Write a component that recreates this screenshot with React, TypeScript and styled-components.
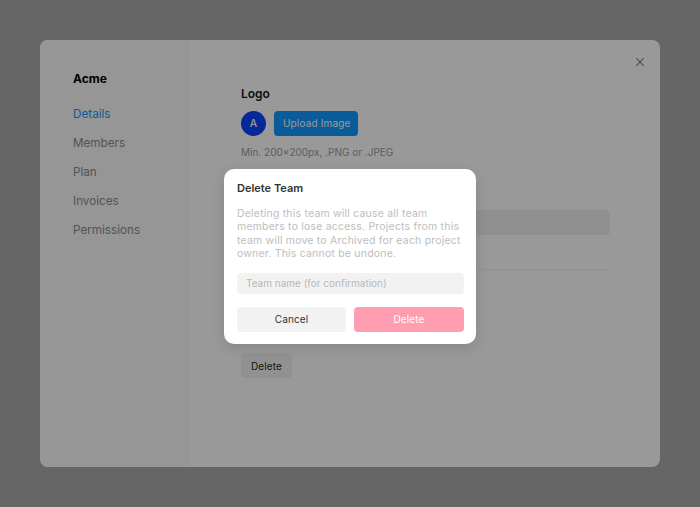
import React from 'react'
import styled, { createGlobalStyle } from 'styled-components'
import { X } from 'lucide-react'

const GlobalStyle = createGlobalStyle`
  html, body {
    margin: 0;
    padding: 0;
    background: #aaaaaa;
    font-family: 'Inter', 'Liberation Sans', sans-serif;
    -webkit-font-smoothing: antialiased;
  }
  * {
    box-sizing: border-box;
  }
`

const Page = styled.div`
  position: relative;
  width: 700px;
  height: 507px;
  padding: 40px;
  overflow: hidden;
`

const Panel = styled.div`
  position: relative;
  display: flex;
  width: 620px;
  height: 427px;
  background: #ffffff;
  border-radius: 8px;
  overflow: hidden;
`

const Sidebar = styled.nav`
  display: flex;
  flex-direction: column;
  width: 150px;
  padding: 32px 0 0 33px;
  background: #fafafa;
`

const TeamName = styled.div`
  font-size: 12px;
  line-height: 14px;
  font-weight: 700;
  color: #000000;
  margin-bottom: 14px;
`

const NavItem = styled.a<{ $active?: boolean }>`
  font-size: 11.7px;
  line-height: 29.1px;
  color: ${(props) => (props.$active ? '#1298ff' : '#8c8c8c')};
`

const Main = styled.main`
  flex: 1;
  padding: 46px 50px 0 51px;
`

const SectionTitle = styled.h3`
  margin: 0;
  font-size: 12px;
  line-height: 16px;
  font-weight: 600;
  color: #171717;
`

const LogoRow = styled.div`
  display: flex;
  align-items: center;
  gap: 8px;
  margin-top: 9px;
`

const Avatar = styled.div`
  display: flex;
  align-items: center;
  justify-content: center;
  width: 25px;
  height: 25px;
  border-radius: 50%;
  background: #0a45ff;
  color: #ffffff;
  font-size: 10.5px;
  font-weight: 500;
`

const UploadButton = styled.button`
  height: 25px;
  padding: 0 8px 1px 9px;
  border: none;
  border-radius: 4px;
  background: #1298ff;
  color: #ffffff;
  font-family: inherit;
  font-size: 10px;
  letter-spacing: 0.15px;
`

const Hint = styled.p`
  margin: 9px 0 0;
  font-size: 10px;
  line-height: 14px;
  color: #9c9c9c;
`

const FakeInput = styled.div`
  height: 25px;
  margin-top: 51px;
  border-radius: 4px;
  background: #f0f0f0;
`

const Divider = styled.hr`
  height: 1px;
  margin: 34px 0 0;
  border: none;
  background: #f2f2f2;
`

const DangerSection = styled.section`
  margin-top: 83px;
`

const GreyButton = styled.button`
  height: 25px;
  padding: 0 10px;
  border: none;
  border-radius: 4px;
  background: #f2f2f2;
  color: #262626;
  font-family: inherit;
  font-size: 10px;
  letter-spacing: 0.1px;
`

const CloseButton = styled.button`
  position: absolute;
  top: 15px;
  right: 13px;
  display: flex;
  padding: 0;
  border: none;
  background: none;
  color: #666666;
`

const Backdrop = styled.div`
  position: absolute;
  inset: 0;
  background: rgba(0, 0, 0, 0.4);
`

const Dialog = styled.div`
  position: absolute;
  left: 224px;
  top: 169px;
  width: 252px;
  height: 175px;
  padding: 12px 12px 12px 13px;
  border-radius: 10px;
  background: #ffffff;
  box-shadow: 0 4px 14px rgba(0, 0, 0, 0.12);
`

const DialogTitle = styled.h2`
  margin: 0;
  font-size: 11px;
  line-height: 14px;
  font-weight: 600;
  color: #333333;
`

const DialogBody = styled.p`
  margin: 12px 0 0;
  font-size: 10.5px;
  line-height: 13.35px;
  letter-spacing: 0.2px;
  color: #bdbdbd;
`

const ConfirmInput = styled.div`
  display: flex;
  align-items: center;
  height: 21px;
  margin-top: 13px;
  padding: 0 0 1px 9px;
  border-radius: 4px;
  background: #f2f2f2;
  color: #b8b8b8;
  font-size: 10px;
`

const DialogActions = styled.div`
  display: grid;
  grid-template-columns: 109px 110px;
  gap: 8px;
  margin-top: 13px;
`

const DialogButton = styled.button<{ $danger?: boolean }>`
  height: 25px;
  padding: 0 0 1px;
  border: none;
  border-radius: 4px;
  background: ${(props) => (props.$danger ? '#ff9db1' : '#f2f2f2')};
  color: ${(props) => (props.$danger ? '#ffffff' : '#333333')};
  font-family: inherit;
  font-size: 10px;
  letter-spacing: 0.1px;
`

const navItems = ['Details', 'Members', 'Plan', 'Invoices', 'Permissions']

const App: React.FunctionComponent = () => {
  return (
    <Page>
      <GlobalStyle />
      <Panel>
        <Sidebar>
          <TeamName>Acme</TeamName>
          {navItems.map((item, i) => (
            <NavItem key={item} $active={i === 0}>
              {item}
            </NavItem>
          ))}
        </Sidebar>
        <Main>
          <SectionTitle>Logo</SectionTitle>
          <LogoRow>
            <Avatar>A</Avatar>
            <UploadButton>Upload Image</UploadButton>
          </LogoRow>
          <Hint>Min. 200×200px, .PNG or .JPEG</Hint>
          <FakeInput />
          <Divider />
          <DangerSection>
            <GreyButton>Delete</GreyButton>
          </DangerSection>
        </Main>
        <CloseButton>
          <X size={14} strokeWidth={1.8} />
        </CloseButton>
      </Panel>
      <Backdrop />
      <Dialog>
        <DialogTitle>Delete Team</DialogTitle>
        <DialogBody>
          Deleting this team will cause all team members to lose access. Projects from this team will move to Archived
          for each project owner. This cannot be undone.
        </DialogBody>
        <ConfirmInput>Team name (for confirmation)</ConfirmInput>
        <DialogActions>
          <DialogButton>Cancel</DialogButton>
          <DialogButton $danger>Delete</DialogButton>
        </DialogActions>
      </Dialog>
    </Page>
  )
}

export default App
